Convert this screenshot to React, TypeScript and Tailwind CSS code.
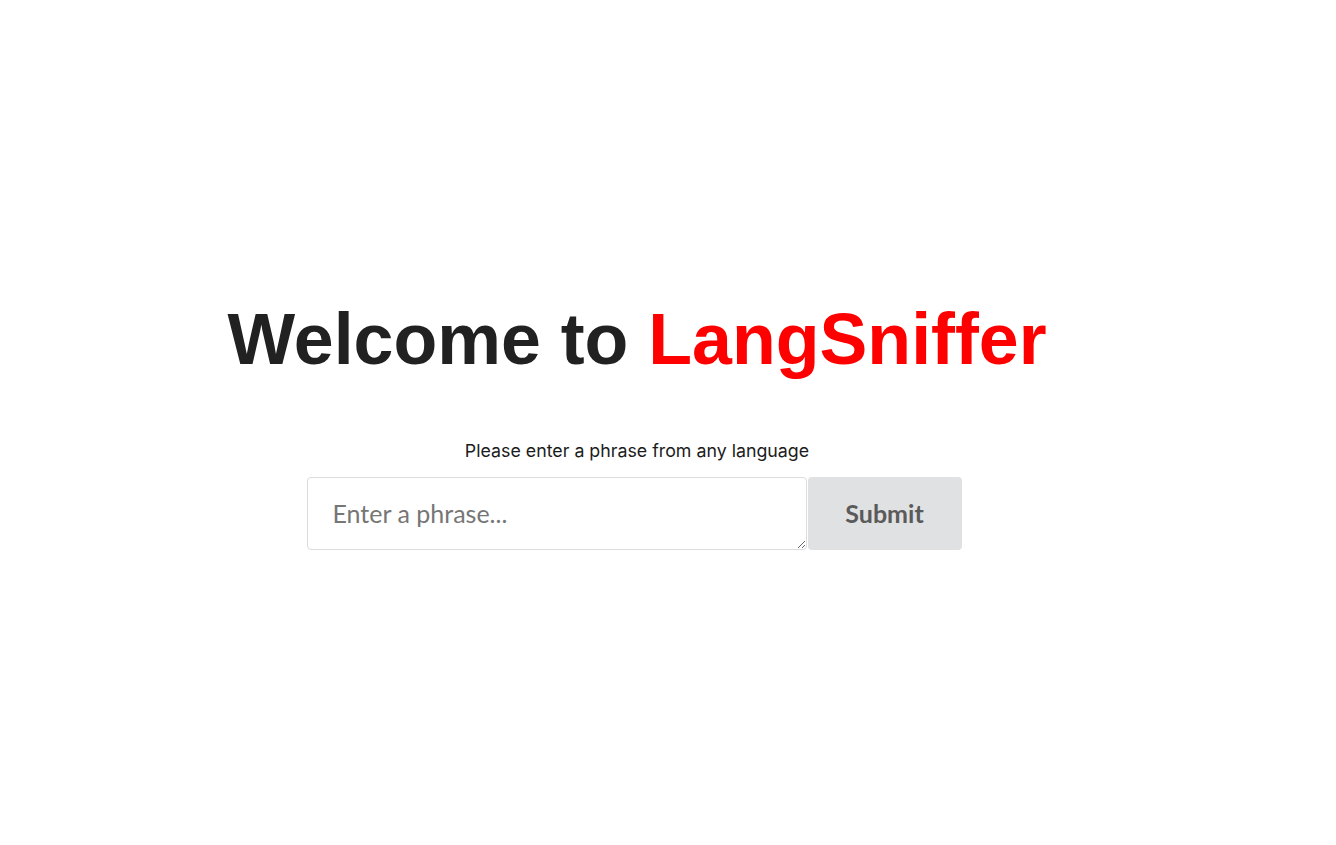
import React, { useState } from "react";

const App = () => {
  const [phrase, setPhrase] = useState("");

  return (
    <div className="min-h-screen w-full bg-white">
      <div className="flex flex-col items-center pt-[303px] pr-[62px]">
        <h1 className="text-[71.7px] leading-[72px] font-bold text-[#212121] font-['Liberation_Sans',Arial,sans-serif] whitespace-nowrap">
          Welcome to <span className="text-[#ff0000]">LangSniffer</span>
        </h1>

        <p className="mt-[64px] text-[17.8px] leading-6 text-[#1b1b1b] font-['Inter',sans-serif]">
          Please enter a phrase from any language
        </p>

        <form
          className="mt-[14px] mr-[6px] flex items-stretch"
          onSubmit={(e) => e.preventDefault()}
        >
          <textarea
            value={phrase}
            onChange={(e) => setPhrase(e.target.value)}
            placeholder="Enter a phrase..."
            className="w-[500px] h-[73px] rounded-[4px] border border-[#dcdcdc] bg-white px-[25px] py-[18px] text-[25px] leading-[35px] text-[#333] placeholder:text-[#767676] font-['Lato',sans-serif] outline-none"
          />
          <button
            type="submit"
            className="ml-px w-[154px] h-[73px] rounded-[4px] bg-[#e0e1e2] text-[25px] font-bold text-[#5a5a5a] font-['Lato',sans-serif]"
          >
            Submit
          </button>
        </form>
      </div>
    </div>
  );
};

export default App;
